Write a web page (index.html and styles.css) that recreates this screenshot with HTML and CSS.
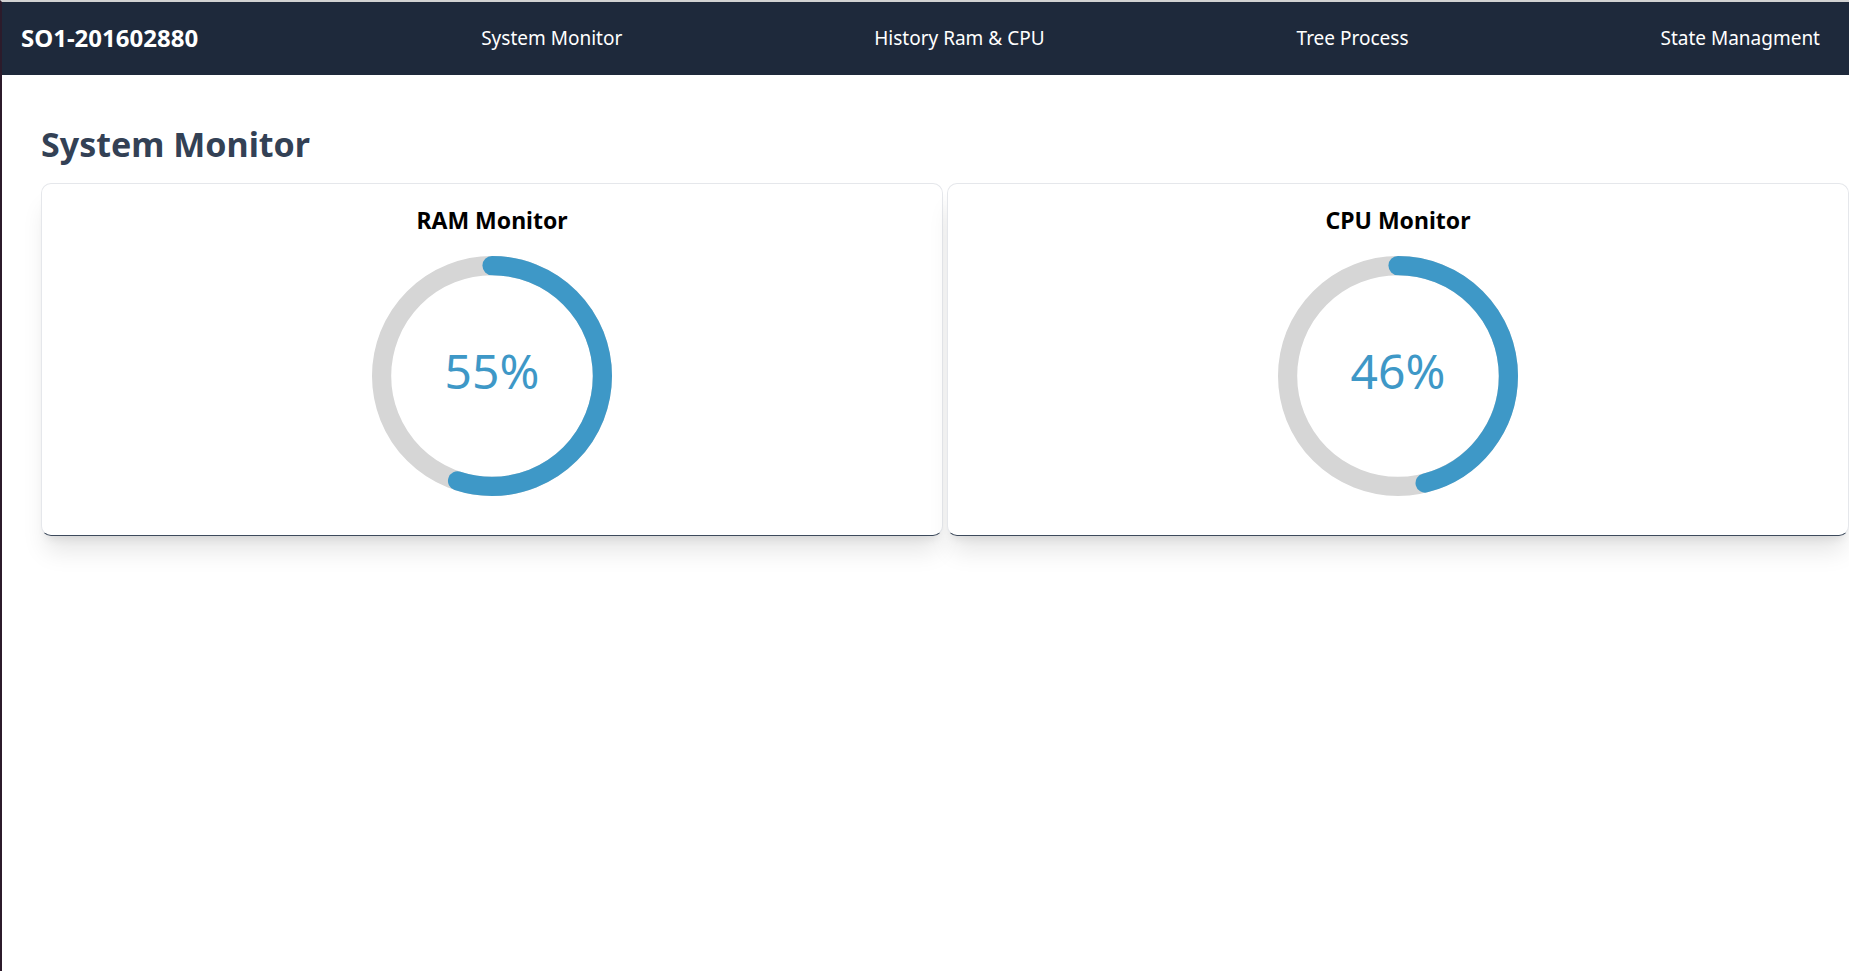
FILE: index.html
```html
<!DOCTYPE html>
<html lang="en">
<head>
<meta charset="utf-8">
<title>SO1-201602880</title>
<link rel="stylesheet" href="styles.css">
</head>
<body>
<nav class="navbar">
  <a class="brand" href="#">SO1-201602880</a>
  <ul class="nav-links">
    <li><a href="#">System Monitor</a></li>
    <li><a href="#">History Ram &amp; CPU</a></li>
    <li><a href="#">Tree Process</a></li>
    <li><a href="#">State Managment</a></li>
  </ul>
</nav>
<main class="content">
  <h1 class="page-title">System Monitor</h1>
  <div class="cards">
    <section class="card">
      <h2 class="card-title">RAM Monitor</h2>
      <svg class="gauge" viewBox="0 0 100 100">
        <path class="gauge-trail" d="M 50,50 m 0,-46 a 46,46 0 1 1 0,92 a 46,46 0 1 1 0,-92" style="stroke-dasharray: 289.027px, 289.027px; stroke-dashoffset: 0px;"></path>
        <path class="gauge-path" d="M 50,50 m 0,-46 a 46,46 0 1 1 0,92 a 46,46 0 1 1 0,-92" style="stroke-dasharray: 289.027px, 289.027px; stroke-dashoffset: 130.062px;"></path>
        <text class="gauge-text" x="50" y="50">55%</text>
      </svg>
    </section>
    <section class="card">
      <h2 class="card-title">CPU Monitor</h2>
      <svg class="gauge" viewBox="0 0 100 100">
        <path class="gauge-trail" d="M 50,50 m 0,-46 a 46,46 0 1 1 0,92 a 46,46 0 1 1 0,-92" style="stroke-dasharray: 289.027px, 289.027px; stroke-dashoffset: 0px;"></path>
        <path class="gauge-path" d="M 50,50 m 0,-46 a 46,46 0 1 1 0,92 a 46,46 0 1 1 0,-92" style="stroke-dasharray: 289.027px, 289.027px; stroke-dashoffset: 156.075px;"></path>
        <text class="gauge-text" x="50" y="50">46%</text>
      </svg>
    </section>
  </div>
</main>
</body>
</html>
```
FILE: styles.css
```css
html, body {
  margin: 0;
  padding: 0;
}
body {
  font-family: "Noto Sans", "Open Sans", sans-serif;
  background: #ffffff;
  border-left: 2px solid #2c1b2b;
  border-top: 2px solid #d2d2d2;
  min-height: 971px;
  box-sizing: border-box;
}
.navbar {
  display: flex;
  align-items: center;
  height: 73px;
  background: #1e293b;
  padding: 0 29px 2px 19px;
  box-sizing: border-box;
}
.brand {
  color: #ffffff;
  font-weight: 700;
  font-size: 24px;
  text-decoration: none;
}
.nav-links {
  flex: 1;
  display: flex;
  justify-content: space-between;
  list-style: none;
  margin: 0 0 0 283px;
  padding: 0;
}
.nav-links a {
  color: #ffffff;
  font-size: 19px;
  text-decoration: none;
}
.content {
  padding: 0 0 0 39px;
}
.page-title {
  margin: 50px 0 20px;
  font-size: 34px;
  line-height: 38px;
  font-weight: 700;
  color: #334155;
}
.cards {
  display: grid;
  grid-template-columns: 1fr 1fr;
  gap: 4px;
}
.card {
  display: flex;
  flex-direction: column;
  align-items: center;
  background: #ffffff;
  border: 1px solid #e5e7eb;
  border-bottom-color: #3d4a5c;
  border-radius: 10px;
  box-shadow: 0 20px 25px -5px rgba(0, 0, 0, 0.1), 0 8px 10px -6px rgba(0, 0, 0, 0.1);
  padding: 22px 0 39px;
}
.card-title {
  margin: 0 0 22px;
  font-size: 23px;
  line-height: 28px;
  font-weight: 700;
  color: #000000;
}
.gauge {
  width: 240px;
  height: 240px;
  display: block;
}
.gauge-trail {
  fill: none;
  stroke: #d6d6d6;
  stroke-width: 8;
  stroke-linecap: round;
}
.gauge-path {
  fill: none;
  stroke: #3e98c7;
  stroke-width: 8;
  stroke-linecap: round;
}
.gauge-text {
  fill: #3e98c7;
  font-size: 20px;
  dominant-baseline: middle;
  text-anchor: middle;
}
```
